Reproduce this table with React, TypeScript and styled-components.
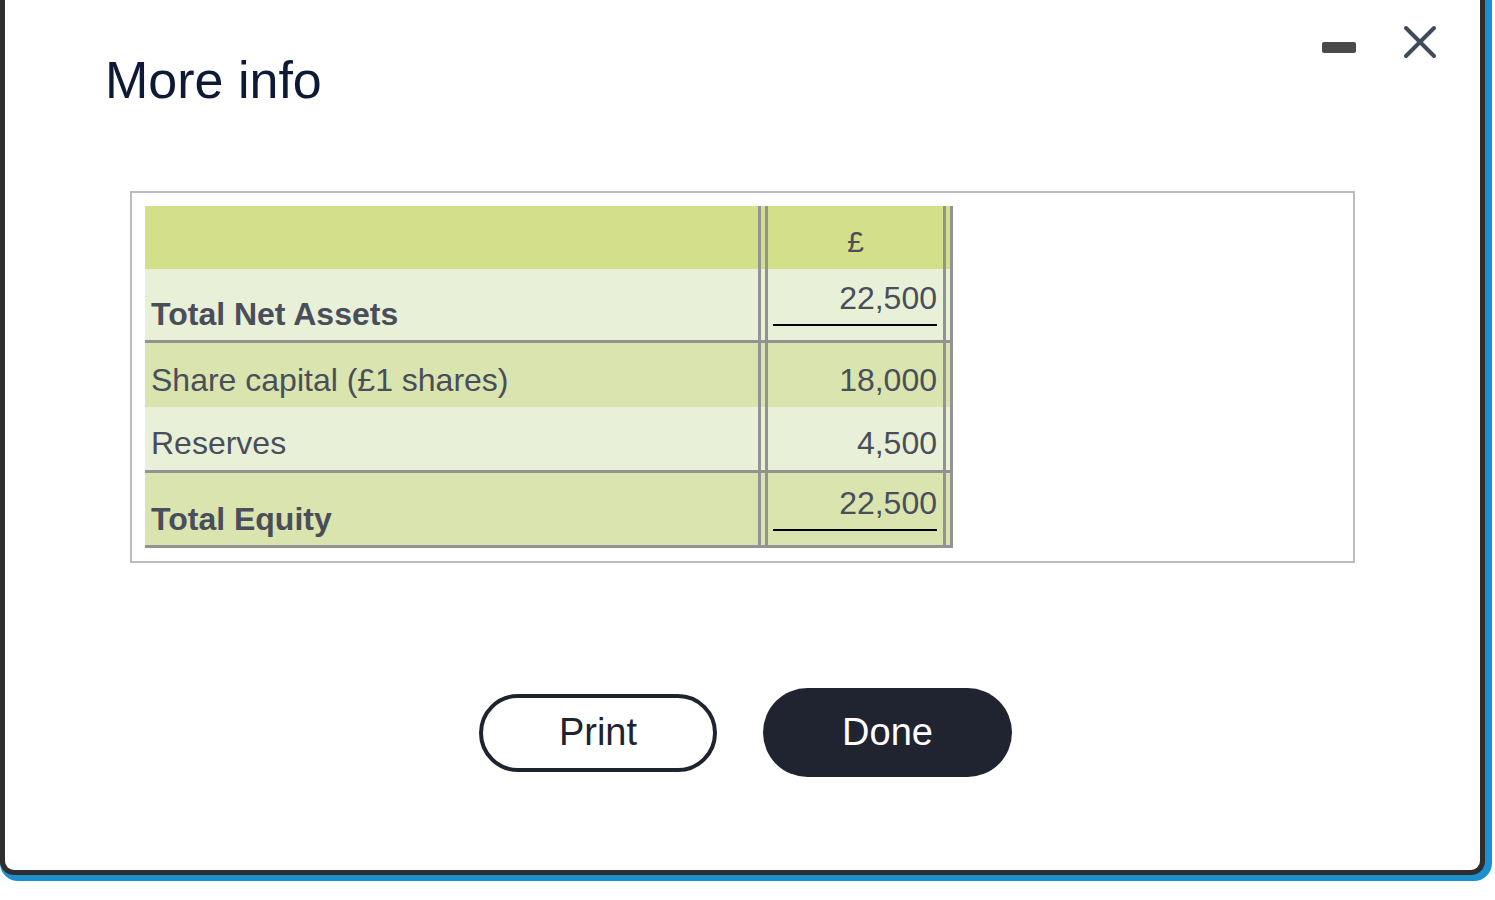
import React from 'react';
import styled, { createGlobalStyle } from 'styled-components';

const GlobalStyle = createGlobalStyle`
  body {
    margin: 0;
    background: #ffffff;
    font-family: 'Liberation Sans', Arial, sans-serif;
  }
`;

const Frame = styled.div`
  box-sizing: border-box;
  width: 1492px;
  height: 881px;
  padding: 0 7px 6px 0;
  background: #1b8fcf;
  border-radius: 0 0 18px 18px;
`;

const Dialog = styled.div`
  box-sizing: border-box;
  width: 1485px;
  height: 875px;
  background: #fff;
  border: 5px solid #2e2e2e;
  border-top: none;
  border-radius: 0 0 14px 14px;
  display: flex;
  flex-direction: column;
`;

const Header = styled.div`
  display: flex;
  justify-content: space-between;
  align-items: flex-start;
  padding: 25px 43px 0 100px;
`;

const Title = styled.h1`
  margin: 25px 0 0;
  font-size: 52px;
  line-height: 60px;
  font-weight: normal;
  color: #0e1a35;
`;

const Controls = styled.div`
  display: flex;
  align-items: flex-start;
  gap: 47px;
`;

const MinimizeBar = styled.div`
  margin-top: 17px;
  width: 34px;
  height: 11px;
  border-radius: 2px;
  background: #4a4a4a;
`;

const CloseIcon = styled.svg`
  display: block;
  width: 34px;
  height: 34px;
`;

const Panel = styled.div`
  box-sizing: border-box;
  margin: 81px 0 0 125px;
  width: 1225px;
  padding: 13px;
  border: 2px solid #bcbcbc;
`;

const Table = styled.div`
  width: 808px;
  display: flex;
  flex-direction: column;
  color: #4a4e5b;
`;

const Row = styled.div<{ $bg: string; $h: number; $rule?: boolean }>`
  display: grid;
  grid-template-columns: 613px 3px 4px 3px 175px 3px 4px 3px;
  height: ${(p) => p.$h}px;
  background: ${(p) => p.$bg};
  border-bottom: ${(p) => (p.$rule ? '3px solid #939393' : 'none')};
`;

const Label = styled.div<{ $bold?: boolean; $bottom?: boolean }>`
  display: flex;
  align-items: ${(p) => (p.$bottom ? 'flex-end' : 'center')};
  padding: ${(p) => (p.$bottom ? '0 0 8px 6px' : '9px 0 0 6px')};
  font-size: 32px;
  line-height: 36px;
  font-weight: ${(p) => (p.$bold ? 'bold' : 'normal')};
`;

const VLine = styled.div`
  background: #939393;
`;

const Gap = styled.div``;

const Value = styled.div<{ $total?: boolean }>`
  display: flex;
  flex-direction: column;
  justify-content: ${(p) => (p.$total ? 'flex-end' : 'center')};
  align-items: stretch;
  padding: ${(p) => (p.$total ? '0 6px 14px 5px' : '9px 6px 0 5px')};
  font-size: 32px;
  line-height: 36px;
  text-align: right;
`;

const Underline = styled.div<{ $gap: number }>`
  margin-top: ${(p) => p.$gap}px;
  height: 2px;
  background: #000;
`;

const Currency = styled.div`
  display: flex;
  align-items: center;
  justify-content: center;
  padding-top: 8px;
  font-size: 30px;
`;

const Buttons = styled.div`
  display: flex;
  justify-content: center;
  align-items: center;
  gap: 46px;
  margin-top: 125px;
  padding-left: 6px;
`;

const Button = styled.button<{ $primary?: boolean }>`
  box-sizing: border-box;
  font-family: 'Liberation Sans', Arial, sans-serif;
  font-size: 38px;
  border-radius: 999px;
  cursor: pointer;
  width: ${(p) => (p.$primary ? '249px' : '238px')};
  height: ${(p) => (p.$primary ? '89px' : '78px')};
  border: ${(p) => (p.$primary ? 'none' : '4px solid #1e2330')};
  background: ${(p) => (p.$primary ? '#1f2430' : '#fff')};
  color: ${(p) => (p.$primary ? '#fff' : '#1e2330')};
`;

const HEAD = '#d4df89';
const LIGHT = '#e8f1d8';
const MID = '#d9e4ae';

const Lines: React.FC<{ children: React.ReactNode; label: React.ReactNode }> = ({ label, children }) => (
  <>
    {label}
    <VLine />
    <Gap />
    <VLine />
    {children}
    <VLine />
    <Gap />
    <VLine />
  </>
);

const App: React.FC = () => {
  return (
    <>
      <GlobalStyle />
      <Frame>
        <Dialog>
          <Header>
            <Title>More info</Title>
            <Controls>
              <MinimizeBar />
              <CloseIcon viewBox="0 0 34 34">
                <path d="M3 3 L31 31 M31 3 L3 31" stroke="#3d4b5a" strokeWidth="4" strokeLinecap="round" fill="none" />
              </CloseIcon>
            </Controls>
          </Header>

          <Panel>
            <Table>
              <Row $bg={HEAD} $h={63}>
                <Lines label={<Label />}>
                  <Currency>£</Currency>
                </Lines>
              </Row>
              <Row $bg={LIGHT} $h={71} $rule>
                <Lines label={<Label $bold $bottom>Total Net Assets</Label>}>
                  <Value $total>
                    22,500
                    <Underline $gap={8} />
                  </Value>
                </Lines>
              </Row>
              <Row $bg={MID} $h={64}>
                <Lines label={<Label>Share capital (£1 shares)</Label>}>
                  <Value>18,000</Value>
                </Lines>
              </Row>
              <Row $bg={LIGHT} $h={63} $rule>
                <Lines label={<Label>Reserves</Label>}>
                  <Value>4,500</Value>
                </Lines>
              </Row>
              <Row $bg={MID} $h={72} $rule>
                <Lines label={<Label $bold $bottom>Total Equity</Label>}>
                  <Value $total>
                    22,500
                    <Underline $gap={8} />
                  </Value>
                </Lines>
              </Row>
            </Table>
          </Panel>

          <Buttons>
            <Button>Print</Button>
            <Button $primary>Done</Button>
          </Buttons>
        </Dialog>
      </Frame>
    </>
  );
};

export default App;
